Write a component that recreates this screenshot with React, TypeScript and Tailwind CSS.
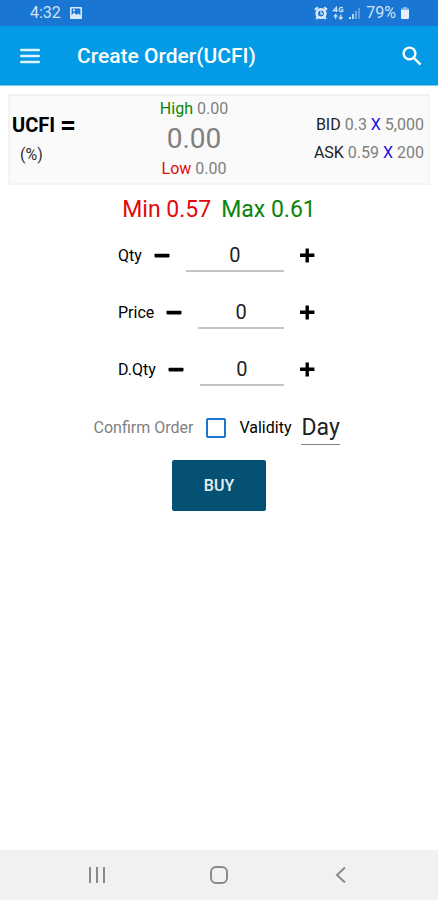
import React, { useState } from 'react';

interface StepperRowProps {
    id: string;
    label: string;
}

const StepperRow: React.FC<StepperRowProps> = ({ id, label }) => {
    const [value, setValue] = useState('0');

    const step = (amount: number) => {
        const next = (Number(value) || 0) + amount;
        setValue(String(Math.max(0, next)));
    };

    return (
        <div className="flex h-[57px] w-[202px] items-center">
            <label htmlFor={id} className="mr-2 text-base">{label}</label>
            <button type="button" onClick={() => step(-1)} aria-label={`Decrease ${label}`} className="p-1">
                <svg viewBox="0 0 16 16" className="size-4" fill="currentColor">
                    <rect x="0.5" y="5.8" width="15" height="3.6" rx="0.8" />
                </svg>
            </button>
            <input
                id={id}
                value={value}
                onChange={e => setValue(e.target.value)}
                inputMode="decimal"
                className="mx-3 h-[33px] w-0 flex-1 border-b-2 border-[#c4c4c4] text-center text-xl text-[#222] outline-none focus:border-[#1976d2]"
            />
            <button type="button" onClick={() => step(1)} aria-label={`Increase ${label}`} className="p-1">
                <svg viewBox="0 0 16 16" className="size-4" fill="currentColor">
                    <path d="M0 5.600h5.500V.4h3.400v5.200h5.500V9H8.900v5.400H5.500V9H0z" />
                </svg>
            </button>
        </div>
    );
};

const StatusBar = () => (
    <div className="flex h-[26px] items-center justify-between bg-[#1976d2] pr-7 pl-[30px] text-[#cfe3f7]">
        <div className="flex items-center gap-2">
            <span className="text-base">4:32</span>
            {/* Screenshot notification */}
            <svg viewBox="0 0 14 14" className="size-[14px]">
                <path fillRule="evenodd" fill="#d9eafa" d="M2 1h10a1 1 0 0 1 1 1v10a1 1 0 0 1-1 1H2a1 1 0 0 1-1-1V2a1 1 0 0 1 1-1zM2.600 2.600v6.600l2.600-2.800 2.200 2.600 1.800-1.600 2.200 1.800V2.600z" />
                <path fill="#d9eafa" d="M4 3.500h2v1.800H4z" />
            </svg>
        </div>
        <div className="flex items-center">
            {/* Alarm */}
            <svg viewBox="0 0 14 14" className="size-[14px]" fill="none" stroke="#e0eefb">
                <circle cx="7" cy="7.500" r="4.300" strokeWidth="2.600" />
                <path d="M7 5v2.900h2.200" strokeWidth="1.200" />
                <path d="M1 3.800 3.800 1.300M13 3.800l-2.800-2.500M3.800 11.200l-1.600 1.800M10.200 11.200l1.600 1.800" strokeWidth="2" />
            </svg>
            {/* 4G with data arrows */}
            <svg viewBox="0 0 12 14" className="ml-1 h-[14px] w-3" fill="none" stroke="#cfe3f7" strokeWidth="1.200">
                <path d="M4.400 6V1.200L1.400 4.600H5.600" />
                <path d="M10.800 2.200C9.600.9 7.100 1.400 7.100 3.600S9.700 6.300 10.800 5V3.800H9.100" />
                <path d="M3.600 13V9M1.800 10.600 3.600 8.600l1.800 2M8.800 8.600v4M7 11l1.800 2 1.800-2" />
            </svg>
            {/* Signal strength */}
            <svg viewBox="0 0 14 14" className="ml-1 size-[14px]">
                <rect x="1" y="11" width="2" height="2" fill="#cfe3f7" />
                <rect x="4" y="8" width="2" height="5" fill="#b9d6f3" />
                <rect x="7" y="5" width="2" height="8" fill="#6ba6e3" />
                <rect x="10" y="2" width="2" height="11" fill="#5c9cdf" />
            </svg>
            <span className="ml-1 text-base">79%</span>
            {/* Battery */}
            <svg viewBox="0 0 10 14" className="ml-1 h-[14px] w-[10px]">
                <path fill="#8fbcec" d="M3.300 1h3.400v1.200H8a1 1 0 0 1 1 1V4H1v-.800a1 1 0 0 1 1-1h1.300z" />
                <path fill="#e3f0fc" d="M1 4h8v8a1 1 0 0 1-1 1H2a1 1 0 0 1-1-1z" />
            </svg>
        </div>
    </div>
);

const App: React.FC = () => {
    const [confirmOrder, setConfirmOrder] = useState(false);
    const [validity, setValidity] = useState('Day');

    return (
        <div className="flex min-h-screen flex-col bg-white font-[Roboto,sans-serif] text-black">
            <StatusBar />

            <header className="flex h-[60px] items-center border-b border-[#7cc8f0] bg-[#039be5] px-4 text-white">
                <button type="button" aria-label="Menu" className="p-1">
                    <svg viewBox="0 0 20 16" className="h-4 w-5" fill="none" stroke="#e1f3fc" strokeWidth="2.600" strokeLinecap="round">
                        <path d="M1.300 2h17.400M1.300 8h17.400M1.300 14h17.400" />
                    </svg>
                </button>
                <h1 className="ml-[33px] flex-1 pt-[2px] text-[21px] font-medium">Create Order(UCFI)</h1>
                <button type="button" aria-label="Search">
                    <svg viewBox="0 0 20 20" className="size-5" fill="none" stroke="currentColor" strokeWidth="2.400">
                        <circle cx="7.500" cy="7.500" r="5.900" />
                        <path d="m11.800 11.800 6.800 6.800" />
                    </svg>
                </button>
            </header>

            <main className="flex flex-1 flex-col items-center px-2 pt-2">
                {/* Quote summary */}
                <section className="grid h-[91px] w-full grid-cols-3 items-center border-2 border-[#f3f3f3] bg-[#fafafa] pr-1 pb-[2px] pl-[2px]">
                    <div>
                        <p className="flex items-center gap-[5px] text-xl font-bold">
                            UCFI <span className="text-[28px] leading-7">=</span>
                        </p>
                        <p className="mt-1 ml-2 text-base text-[#333]">(%)</p>
                    </div>
                    <div className="pr-12 text-center whitespace-nowrap text-[#808080]">
                        <p className="text-base leading-6"><span className="text-[#0a850a]">High</span> 0.00</p>
                        <p className="text-[28px] leading-9">0.00</p>
                        <p className="text-base leading-6"><span className="text-[#e00b0b]">Low</span> 0.00</p>
                    </div>
                    <div className="text-right text-base leading-7 whitespace-nowrap text-[#808080]">
                        <p><span className="text-[#222]">BID</span> 0.3 <span className="text-[#1a12e0]">X</span> 5,000</p>
                        <p><span className="text-[#222]">ASK</span> 0.59 <span className="text-[#1a12e0]">X</span> 200</p>
                    </div>
                </section>

                <div className="flex h-[42px] items-center gap-[10px] pt-2 text-[23px]">
                    <span className="text-[#e00b0b]">Min 0.57</span>
                    <span className="text-[#0a850a]">Max 0.61</span>
                </div>

                <form className="flex flex-col items-center" onSubmit={e => e.preventDefault()}>
                    <StepperRow id="qty" label="Qty" />
                    <StepperRow id="price" label="Price" />
                    <StepperRow id="dqty" label="D.Qty" />

                    <div className="flex h-[62px] items-center pr-1 pb-[2px] text-base">
                        <label htmlFor="confirm" className="text-[#808080]">Confirm Order</label>
                        <input
                            id="confirm"
                            type="checkbox"
                            checked={confirmOrder}
                            onChange={e => setConfirmOrder(e.target.checked)}
                            className="mx-[13px] size-5 appearance-none rounded-xs border-2 border-[#1976d2] checked:bg-[#1976d2]"
                        />
                        <label htmlFor="validity">Validity</label>
                        <select
                            id="validity"
                            value={validity}
                            onChange={e => setValidity(e.target.value)}
                            className="ml-[10px] h-[34px] appearance-none border-b border-[#808080] text-[23px] text-[#222] outline-none"
                        >
                            <option>Day</option>
                        </select>
                    </div>

                    <button type="submit" className="h-[51px] w-[94px] rounded-xs bg-[#045174] text-base font-medium text-[#e8f1f5]">
                        BUY
                    </button>
                </form>
            </main>

            {/* System navigation */}
            <nav className="flex h-[50px] items-center justify-center gap-[98px] bg-[#f1f1f1] text-[#8a8a8a]">
                <button type="button" aria-label="Recents">
                    <svg viewBox="0 0 24 24" className="size-6" fill="none" stroke="currentColor" strokeWidth="2">
                        <path d="M5 4v16M12 4v16M19 4v16" />
                    </svg>
                </button>
                <button type="button" aria-label="Home">
                    <svg viewBox="0 0 24 24" className="size-6" fill="none" stroke="currentColor" strokeWidth="2">
                        <rect x="4" y="4" width="16" height="16" rx="5" />
                    </svg>
                </button>
                <button type="button" aria-label="Back">
                    <svg viewBox="0 0 24 24" className="size-6" fill="none" stroke="currentColor" strokeWidth="2">
                        <path d="m16 4.500-8 7.500 8 7.500" />
                    </svg>
                </button>
            </nav>
        </div>
    );
};

export default App;
